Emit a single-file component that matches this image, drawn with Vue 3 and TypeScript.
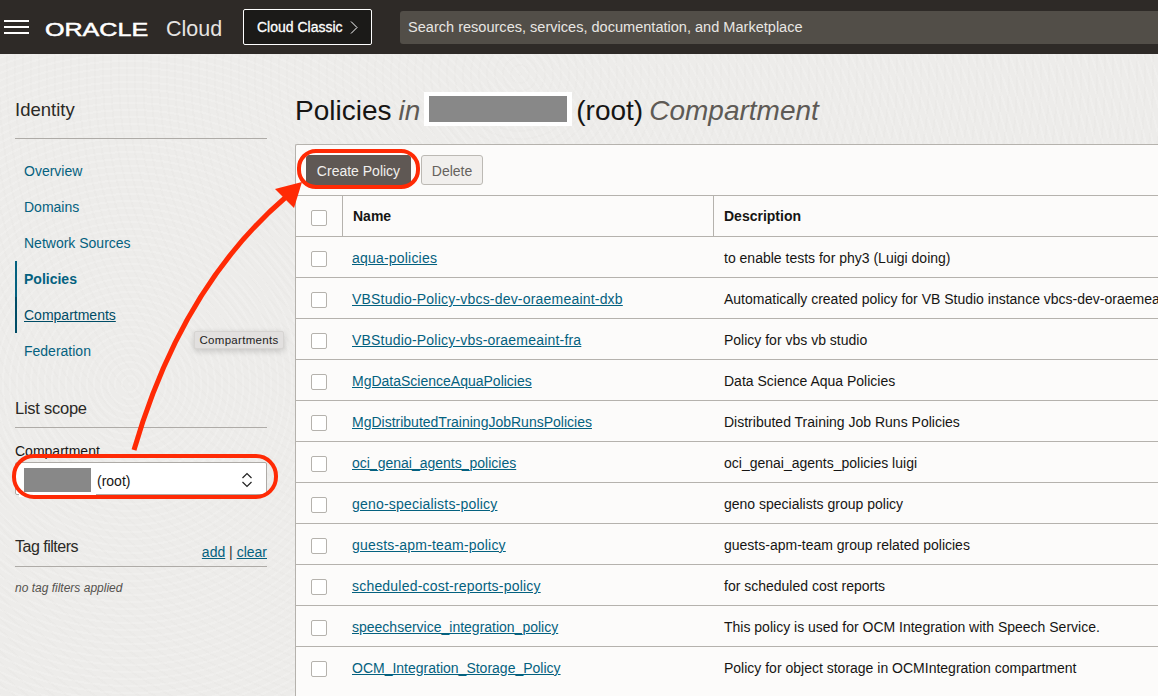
<script setup lang="ts">
const navItems = [
  { label: 'Overview' },
  { label: 'Domains' },
  { label: 'Network Sources' },
  { label: 'Policies', active: true },
  { label: 'Compartments', hover: true },
  { label: 'Federation' }
]

const policies = [
  ['aqua-policies', 'to enable tests for phy3 (Luigi doing)'],
  ['VBStudio-Policy-vbcs-dev-oraemeaint-dxb', 'Automatically created policy for VB Studio instance vbcs-dev-oraemeaint-dxb'],
  ['VBStudio-Policy-vbs-oraemeaint-fra', 'Policy for vbs vb studio'],
  ['MgDataScienceAquaPolicies', 'Data Science Aqua Policies'],
  ['MgDistributedTrainingJobRunsPolicies', 'Distributed Training Job Runs Policies'],
  ['oci_genai_agents_policies', 'oci_genai_agents_policies luigi'],
  ['geno-specialists-policy', 'geno specialists group policy'],
  ['guests-apm-team-policy', 'guests-apm-team group related policies'],
  ['scheduled-cost-reports-policy', 'for scheduled cost reports'],
  ['speechservice_integration_policy', 'This policy is used for OCM Integration with Speech Service.'],
  ['OCM_Integration_Storage_Policy', 'Policy for object storage in OCMIntegration compartment']
]
</script>

<template>
  <div class="page">
    <header class="topbar">
      <button class="burger" aria-label="Menu"><span></span><span></span><span></span></button>
      <div class="logo">
        <span class="logo-oracle">ORACLE</span>
        <span class="logo-cloud">Cloud</span>
      </div>
      <button class="classic">
        Cloud Classic
        <svg width="8" height="13" viewBox="0 0 8 13"><path d="M1 .5l6 6-6 6" fill="none" stroke="#fff" stroke-width="1" /></svg>
      </button>
      <div class="search">Search resources, services, documentation, and Marketplace</div>
    </header>

    <div class="body">
      <aside class="side">
        <h3 class="side-title identity">Identity</h3>
        <nav class="nav">
          <a v-for="item in navItems" :key="item.label" class="nav-item" :class="{ active: item.active, hover: item.hover }">
            {{ item.label }}
          </a>
        </nav>

        <h3 class="side-title scope">List scope</h3>
        <div class="field-label">Compartment</div>
        <div class="select">
          <span class="redact-small"><i></i></span>
          <span class="root">(root)</span>
          <svg class="updown" width="12" height="16" viewBox="0 0 12 16">
            <path d="M1.5 6L6 1.5 10.5 6M1.5 10L6 14.5 10.5 10" fill="none" stroke="#222" stroke-width="1.2" />
          </svg>
        </div>

        <div class="tag-head">
          <h3 class="side-title tag-title">Tag filters</h3>
          <span class="tag-links"><a>add</a> | <a>clear</a></span>
        </div>
        <div class="tag-none">no tag filters applied</div>
      </aside>

      <main class="main">
        <h1 class="title">
          <span>Policies</span>
          <em class="t-in">in</em>
          <span class="redact-big"><i></i></span>
          <span class="t-root">(root)</span>
          <em class="t-comp">Compartment</em>
        </h1>
        <section class="panel">
          <div class="toolbar">
            <button class="btn primary">Create Policy</button>
            <button class="btn delete">Delete</button>
          </div>
          <div class="row head">
            <div class="cell check"><span class="box"></span></div>
            <div class="cell name">Name</div>
            <div class="cell desc">Description</div>
          </div>
          <div v-for="p in policies" :key="p[0]" class="row item">
            <div class="cell check"><span class="box"></span></div>
            <div class="cell name"><a :class="{ hyphened: p[0].includes('-') }">{{ p[0] }}</a></div>
            <div class="cell desc">{{ p[1] }}</div>
          </div>
        </section>
      </main>
    </div>

    <div class="tooltip">Compartments</div>

    <svg class="marks" width="1158" height="696" viewBox="0 0 1158 696">
      <rect x="299" y="151" width="119" height="36" rx="17" fill="none" stroke="#ff2a05" stroke-width="4" />
      <rect x="14" y="456" width="262" height="41" rx="20" fill="none" stroke="#ff2a05" stroke-width="4" />
      <path d="M134 450C163 350 210 262 286 197" fill="none" stroke="#ff2a05" stroke-width="5" />
      <path d="M302 182L275 189 294 208Z" fill="#ff2a05" />
    </svg>
  </div>
</template>

<style scoped>
.page {
  position: relative;
  width: 1158px;
  height: 696px;
  overflow: hidden;
  font-family: "Liberation Sans", Arial, sans-serif;
  background: #edecea;
  color: #161513;
}
.topbar {
  height: 54px;
  background: #2e2a27;
  display: flex;
  align-items: center;
  padding-left: 4px;
}
.burger {
  width: 25px;
  height: 14px;
  padding: 0;
  border: 0;
  background: none;
  display: flex;
  flex-direction: column;
  justify-content: space-between;
}
.burger span {
  display: block;
  height: 2px;
  background: #fff;
}
.logo {
  margin-left: 16px;
  width: 198px;
  display: flex;
  align-items: baseline;
  color: #fff;
  padding-top: 5px;
}
.logo-oracle {
  width: 121px;
  font-size: 19px;
  -webkit-text-stroke: 0.5px #fff;
  transform: scaleX(1.32);
  transform-origin: left;
}
.logo-cloud {
  font-size: 21.5px;
  color: #e6e4e2;
}
.classic {
  width: 129px;
  height: 36px;
  background: #1b1a18;
  border: 1px solid #fff;
  border-radius: 2px;
  color: #fff;
  font: 14px "Liberation Sans", Arial, sans-serif;
  -webkit-text-stroke: 0.3px #fff;
  display: flex;
  align-items: center;
  gap: 7px;
  padding: 0 0 0 13px;
}
.search {
  margin-left: 28px;
  flex: 1;
  height: 33px;
  line-height: 33px;
  background: #524e48;
  border-radius: 3px 0 0 3px;
  padding-left: 8px;
  color: #e8e6e3;
  font-size: 14.55px;
}
.body {
  display: flex;
  height: 642px;
  background-image:
    repeating-radial-gradient(circle at 130px 330px, rgba(255, 255, 255, 0.15) 0 2px, transparent 2px 7px),
    repeating-radial-gradient(circle at 520px 20px, rgba(215, 213, 210, 0.1) 0 2px, transparent 2px 8px);
}
.side {
  width: 295px;
  flex: none;
  padding: 45px 28px 0 15px;
  box-sizing: border-box;
}
.side-title {
  margin: 0;
  font-size: 16.5px;
  font-weight: 400;
  line-height: 22px;
  color: #2b2926;
  border-bottom: 1px solid #aeaba7;
}
.identity {
  font-size: 18.5px;
  padding-bottom: 17px;
}
.nav {
  display: flex;
  flex-direction: column;
  margin-top: 14px;
}
.nav-item {
  height: 36px;
  line-height: 36px;
  padding-left: 9px;
  font-size: 14px;
  color: #04617f;
}
.nav-item.active {
  font-weight: 700;
  border-left: 2px solid #04617f;
  padding-left: 7px;
}
.nav-item.hover {
  color: #004c66;
  text-decoration: underline;
  border-left: 2px solid #004c66;
  padding-left: 7px;
}
.scope {
  margin-top: 28px;
  padding-bottom: 8px;
  letter-spacing: -0.25px;
}
.field-label {
  margin-top: 14px;
  font-size: 14px;
  line-height: 18px;
}
.select {
  height: 33px;
  margin-top: 2px;
  background: #fff;
  border: 1px solid #aeaba7;
  border-radius: 2px;
  display: flex;
  align-items: center;
  font-size: 14px;
  box-sizing: border-box;
}
.redact-small {
  background: #fff;
  padding: 5px;
  margin: 3px 1px 0 3px;
  display: flex;
}
.redact-small i {
  width: 67px;
  height: 24px;
  background: #888;
  display: block;
}
.root {
  flex: 1;
  padding-top: 4px;
}
.updown {
  margin: 3px 13px 0 0;
}
.tag-head {
  position: relative;
  margin-top: 41px;
}
.tag-title {
  font-size: 16px;
  letter-spacing: -0.5px;
  padding-bottom: 8px;
}
.tag-links {
  position: absolute;
  right: 0;
  top: 8px;
  font-size: 14px;
  color: #333;
}
.tag-links a {
  color: #04617f;
  text-decoration: underline;
}
.tag-none {
  margin-top: 14px;
  font-size: 12px;
  font-style: italic;
  color: #55524e;
}
.main {
  flex: 1;
  min-width: 0;
}
.title {
  margin: 38px 0 18px;
  height: 34px;
  font-size: 28px;
  font-weight: 400;
  line-height: 37px;
  white-space: nowrap;
  display: flex;
}
.title em {
  color: #5e5a55;
}
.t-in {
  margin: 0 4px 0 7px;
}
.t-root {
  margin-left: 4px;
}
.t-comp {
  margin-left: 6px;
}
.redact-big {
  background: #fff;
  padding: 4px 5px;
  height: 26px;
  display: flex;
}
.redact-big i {
  width: 138px;
  height: 26px;
  background: #888;
  display: block;
}
.panel {
  background: #fcfbfa;
  border: 1px solid #b5b2ad;
  border-right: 0;
  border-radius: 2px 0 0 0;
  height: 600px;
}
.toolbar {
  height: 50px;
  display: flex;
  align-items: center;
  gap: 10px;
  padding-left: 10px;
}
.btn {
  height: 30px;
  padding: 2px 0 0;
  background: #f1efed;
  border: 1px solid #bcb9b4;
  border-radius: 3px;
  color: #66625d;
  font: 14px "Liberation Sans", Arial, sans-serif;
}
.btn.delete {
  width: 62px;
}
.btn.primary {
  width: 105px;
  background: #5f5854;
  border-color: #5f5854;
  color: #f2f0ee;
}
.row {
  display: flex;
  height: 41px;
  border-top: 1px solid #b5b2ad;
  box-sizing: border-box;
  font-size: 14px;
  align-items: stretch;
}
.head {
  font-weight: 700;
}
.item .name,
.item .desc {
  padding-top: 2px;
}
.cell {
  display: flex;
  align-items: center;
  white-space: nowrap;
  box-sizing: border-box;
  flex: none;
}
.check {
  width: 46px;
  padding-left: 15px;
}
.name {
  width: 372px;
  padding-left: 10px;
}
.name a {
  color: #04617f;
  text-decoration: underline;
}
.name a.hyphened {
  letter-spacing: 0.2px;
}
.desc {
  padding-left: 10px;
}
.head .name {
  border-left: 1px solid #b5b2ad;
  border-right: 1px solid #b5b2ad;
}
.box {
  width: 16px;
  height: 16px;
  margin-top: 4px;
  background: #fff;
  border: 1px solid #b5b2ad;
  border-radius: 2px;
  box-sizing: border-box;
}
.tooltip {
  position: absolute;
  left: 194px;
  top: 331px;
  width: 90px;
  height: 18px;
  line-height: 17px;
  text-align: center;
  background: #e2e0df;
  border: 1px solid #d6d4d2;
  border-radius: 2px;
  box-sizing: border-box;
  box-shadow: 0 2px 6px rgba(0, 0, 0, 0.18);
  font-size: 11.5px;
  letter-spacing: 0.3px;
  color: #222;
}
.marks {
  position: absolute;
  left: 0;
  top: 0;
  pointer-events: none;
}
</style>
